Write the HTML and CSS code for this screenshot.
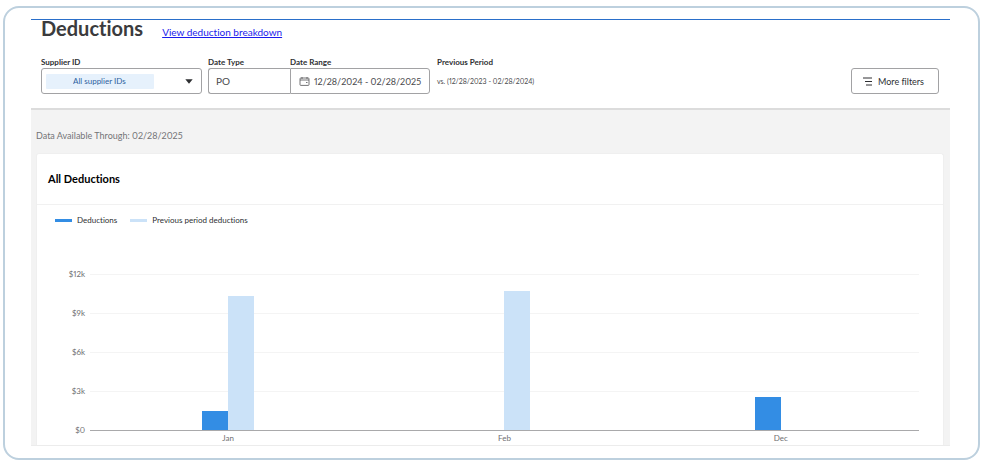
FILE: index.html
```html
<!DOCTYPE html>
<html lang="en">
<head>
<meta charset="utf-8">
<title>Deductions</title>
<link rel="stylesheet" href="styles.css">
</head>
<body>
<div class="frame">
  <main class="app">
    <header class="header">
      <div class="title-row">
        <h1>Deductions</h1>
        <a href="#breakdown">View deduction breakdown</a>
      </div>
      <form class="filters">
        <div class="field supplier">
          <label for="supplier">Supplier ID</label>
          <div class="control">
            <select id="supplier" class="chip"><option>All supplier IDs</option></select>
            <svg class="caret" viewBox="0 0 8 5" aria-hidden="true"><path d="M0.3 0.3h7.4L4 4.8z"/></svg>
          </div>
        </div>
        <div class="field date-type">
          <label for="date-type">Date Type</label>
          <div class="control joined-left">
            <select id="date-type"><option>PO</option></select>
          </div>
        </div>
        <div class="field date-range">
          <label for="date-range">Date Range</label>
          <div class="control joined-right">
            <svg class="calendar" viewBox="0 0 11 9" aria-hidden="true"><rect x="1" y="1" width="9" height="7.4" rx="0.8"/><path d="M1 3h9M3 0v2M8 0v2M7 5.5h1.5"/></svg>
            <input id="date-range" type="text" value="12/28/2024 - 02/28/2025">
          </div>
        </div>
        <div class="field previous">
          <span class="label">Previous Period</span>
          <span class="period">vs. (12/28/2023 - 02/28/2024)</span>
        </div>
        <button type="button" class="more">
          <svg viewBox="0 0 10 9" aria-hidden="true"><path d="M0 1h9M2 4.5h7M3 8h6"/></svg>
          More filters
        </button>
      </form>
    </header>
    <section class="content">
      <p class="available">Data Available Through: 02/28/2025</p>
      <article class="card">
        <h2>All Deductions</h2>
        <div class="body">
          <ul class="legend">
            <li><i class="swatch current"></i>Deductions</li>
            <li><i class="swatch prior"></i>Previous period deductions</li>
          </ul>
          <div class="chart">
            <div class="axis"><span>$12k</span><span>$9k</span><span>$6k</span><span>$3k</span><span>$0</span></div>
            <div class="plot">
              <div class="lines"><i></i><i></i><i></i><i></i></div>
              <div class="bars">
                <div class="group"><i class="current" style="height:12.2%"></i><i class="prior" style="height:86%"></i></div>
                <div class="group"><i></i><i class="prior" style="height:89%"></i></div>
                <div class="group"><i class="current" style="height:21.2%"></i><i></i></div>
              </div>
            </div>
            <div class="months"><span>Jan</span><span>Feb</span><span>Dec</span></div>
          </div>
        </div>
      </article>
    </section>
  </main>
</div>
</body>
</html>
```
FILE: styles.css
```css
* { box-sizing: border-box; }

body {
  margin: 0;
  padding: 6px 3px 4px;
  background: #fff;
  color: #2e2f32;
  font-family: Lato, "Liberation Sans", sans-serif;
  font-size: 8px;
  font-variant-ligatures: none;
  font-variant-numeric: proportional-nums;
}

.frame {
  padding: 11px 28px 12px 26px;
  border: 2px solid #bdd0de;
  border-radius: 16px;
}

.app {
  border-top: 1px solid #2a6fca;
  border-bottom: 1px solid #ececec;
  background: #f3f3f3;
}

.header {
  padding: 0 11px 14px 10px;
  border-bottom: 2px solid #dcdcdc;
  background: #fff;
}

.title-row {
  display: flex;
  align-items: baseline;
  gap: 19px;
  height: 36px;
}

h1 {
  margin: 0;
  color: #3b3b3d;
  font-size: 20px;
  font-weight: 700;
  line-height: 16px;
}

.title-row a {
  color: #1a1aec;
  font-size: 10px;
  line-height: 16px;
}

.filters {
  display: flex;
  align-items: flex-end;
  margin: 0;
}

.field {
  display: flex;
  flex-direction: column;
}

.field label,
.label {
  font-size: 8px;
  font-weight: 700;
  line-height: 12px;
}

.control {
  display: flex;
  align-items: center;
  height: 26px;
  border: 1px solid #a2a2a4;
  border-radius: 3px;
}

.control select,
.control input {
  min-width: 0;
  margin: 0;
  padding: 0;
  border: 0;
  background: none;
  color: #4a4a4d;
  font: inherit;
  font-size: 10px;
  font-variant: inherit;
  appearance: none;
}

.supplier { width: 161px; margin-right: 6px; }
.supplier .control { justify-content: space-between; padding: 0 8px 0 4px; }

.control .chip {
  width: 108px;
  height: 15px;
  padding-left: 27px;
  border-radius: 1px;
  background: #e6f1fc;
  color: #2c5f9e;
  font-size: 8px;
}

.caret { width: 8px; height: 5px; fill: #2e2f32; }

.date-type { width: 82px; }
.joined-left { padding-left: 7px; border-right: 0; border-radius: 3px 0 0 3px; }
.joined-left select { width: 100%; }

.date-range { width: 140px; }
.joined-right { gap: 4px; padding-left: 8px; border-radius: 0 3px 3px 0; }
.control input { flex: 1; font-size: 9px; }

.calendar {
  width: 11px;
  height: 9px;
  fill: none;
  stroke: #515154;
  stroke-width: 0.8;
}

.previous { margin-left: 7px; }
.period { color: #4a4a4d; font-size: 7px; line-height: 26px; }

.more {
  display: flex;
  align-items: center;
  gap: 5px;
  height: 26px;
  margin-left: auto;
  padding: 0 14px 0 11px;
  border: 1px solid #a2a2a4;
  border-radius: 3px;
  background: #fff;
  color: #2e2f32;
  font: inherit;
  font-size: 9px;
}

.more svg {
  width: 10px;
  height: 9px;
  fill: none;
  stroke: #2e2f32;
}

.content { padding: 20px 6px 0 5px; }

.available {
  margin: 0 0 11px;
  color: #747477;
  font-size: 9px;
  line-height: 12px;
}

.card {
  border: 1px solid #efefef;
  border-bottom: 0;
  border-radius: 3px 3px 0 0;
  background: #fff;
}

h2 {
  margin: 0;
  padding: 17px 11px 18px;
  border-bottom: 1px solid #f1f1f1;
  color: #000;
  font-size: 11px;
  font-weight: 700;
  line-height: 15px;
}

.body { padding: 9px 24px 0 18px; }

.legend {
  display: flex;
  gap: 13px;
  margin: 0;
  padding: 0;
  list-style: none;
  line-height: 12px;
}

.legend li { display: flex; align-items: center; gap: 5px; }
.swatch { width: 17px; height: 3px; }
.current { background: #338de4; }
.prior { background: #cbe2f8; }

.chart {
  display: grid;
  grid-template-columns: 30px 1fr;
  column-gap: 5px;
  padding-top: 42px;
  color: #6f6f72;
}

.axis {
  display: grid;
  grid-template-rows: repeat(5, 39px);
  height: 163px;
  text-align: right;
  line-height: 12px;
}

.plot {
  display: grid;
  height: 157px;
  margin-top: 6px;
  border-bottom: 1px solid #a9a9ab;
}

.lines,
.bars { display: grid; grid-area: 1 / 1; }
.lines { grid-template-rows: repeat(4, 1fr); }
.lines i { border-top: 1px solid #f4f4f4; }

.bars,
.months { grid-template-columns: repeat(3, 1fr); }

.group {
  display: flex;
  align-items: flex-end;
  justify-content: center;
}

.group i { width: 26px; }

.months {
  display: grid;
  grid-column: 2;
  padding: 1px 0;
  line-height: 12px;
  text-align: center;
}
```
